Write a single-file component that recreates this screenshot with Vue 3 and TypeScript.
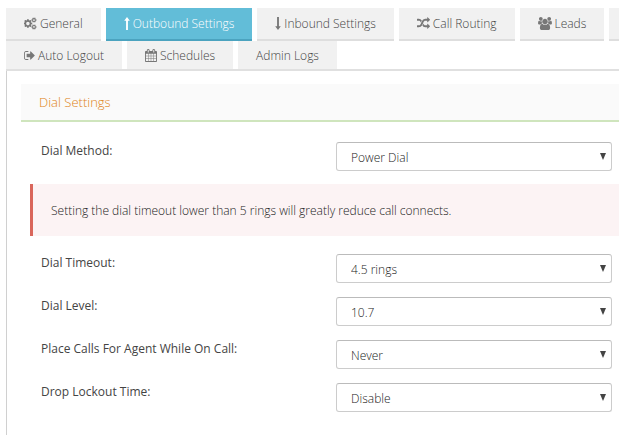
<script setup lang="ts">
import { reactive, ref } from 'vue'

interface Icon {
  box: string
  width: number
  path: string
}

interface Tab {
  label: string
  icon?: Icon
}

interface Field {
  id: string
  label: string
  options: string[]
}

const smallCog =
  'v140q0 16-149 31-12 27-30 52 51 113 51 138 0 4-4 7-122 71-124 71-8 0-46-47t-52-68q-20 2-30 2t-30-2q-14 21-52 68t-46 47q-2 0-124-71-4-3-4-7 0-25 51-138-18-25-30-52-149-15-149-31v-140q0-16 149-31 13-29 30-52-51-113-51-138 0-4 4-7 4-2 35-20t59-34 30-16q8 0 46 46.5t52 67.5q20-2 30-2t30 2q51-71 92-112l6-2q4 0 124 70 4 3 4 7 0 25-51 138 17 23 30 52 149 15 149 31z'

const icons: Record<string, Icon> = {
  cogs: {
    box: '0 0 1920 1792',
    width: 13,
    path:
      'M832 896q0-106-75-181t-181-75-181 75-75 181 75 181 181 75 181-75 75-181zm768 512q0-52-38-90t-90-38-90 38-38 90q0 53 37.5 90.5t90.5 37.5 90.5-37.5 37.5-90.5zm0-1024q0-52-38-90t-90-38-90 38-38 90q0 53 37.5 90.5t90.5 37.5 90.5-37.5 37.5-90.5zm-384 421v185q0 10-7 19.5t-16 10.5l-155 24q-11 35-32 76 34 48 90 115 7 11 7 20 0 12-7 19-23 30-82.5 89.5t-78.5 59.5q-11 0-21-7l-115-90q-37 19-77 31-11 108-23 155-7 24-30 24h-186q-11 0-20-7.5t-10-17.5l-23-153q-34-10-75-31l-118 89q-7 7-20 7-11 0-21-8-144-133-144-160 0-9 7-19 10-14 41-53t47-61q-23-44-35-82l-152-24q-10-1-17-9.5t-7-19.5v-185q0-10 7-19.5t16-10.5l155-24q11-35 32-76-34-48-90-115-7-11-7-20 0-12 7-20 22-30 82-89t79-59q11 0 21 7l115 90q34-18 77-32 11-108 23-154 7-24 30-24h186q11 0 20 7.5t10 17.5l23 153q34 10 75 31l118-89q8-7 20-7 11 0 21 8 144 133 144 160 0 8-7 19-12 16-42 54t-45 60q23 48 34 82l152 23q10 2 17 10.5t7 19.5z' +
      'M1856 1338' + smallCog + 'M1856 314' + smallCog,
  },
  arrowUp: { box: '0 0 6 14', width: 6, path: 'M3 0L6 4H4V14H2V4H0Z' },
  arrowDown: { box: '0 0 6 14', width: 6, path: 'M3 14L6 10H4V0H2V10H0Z' },
  random: {
    box: '0 0 1792 1792',
    width: 13,
    path: 'M666 481q-60 92-137 273-22-45-37-72.5t-40.5-63.5-51-56.5-63-35-81.5-14.5h-224q-14 0-23-9t-9-23v-192q0-14 9-23t23-9h224q250 0 410 225zm1126 799q0 14-9 23l-320 320q-9 9-23 9-13 0-22.5-9.5t-9.5-22.5v-192q-32 0-85 .5t-81 1-73-1-71-5-64-10.5-63-18.5-58-28.5-59-40-55-53.5-56-69.5q59-93 136-273 22 45 37 72.5t40.5 63.5 51 56.5 63 35 81.5 14.5h256v-192q0-14 9-23t23-9q12 0 24 10l319 319q9 9 9 23zm0-896q0 14-9 23l-320 320q-9 9-23 9-13 0-22.5-9.5t-9.5-22.5v-192h-256q-48 0-87 15t-69 45-51 61.5-45 77.5q-32 62-78 171-29 66-49.5 111t-54 105-64 100-74 83-90 68.5-106.5 42-128 16.5h-224q-14 0-23-9t-9-23v-192q0-14 9-23t23-9h224q48 0 87-15t69-45 51-61.5 45-77.5q32-62 78-171 29-66 49.5-111t54-105 64-100 74-83 90-68.5 106.5-42 128-16.5h256v-192q0-14 9-23t23-9q12 0 24 10l319 319q9 9 9 23z',
  },
  users: {
    box: '0 0 1920 1792',
    width: 14,
    path: 'M593 896q-162 5-265 128h-134q-82 0-138-40.5t-56-118.5q0-353 124-353 6 0 43.5 21t97.5 42.5 119 21.5q67 0 133-23-5 37-5 66 0 139 81 256zm1071 637q0 120-73 189.5t-194 69.5h-874q-121 0-194-69.5t-73-189.5q0-53 3.5-103.5t14-109 26.5-108.5 43-97.5 62-81 85.5-53.5 111.5-20q10 0 43 21.5t73 48 107 48 135 21.5 135-21.5 107-48 73-48 43-21.5q61 0 111.5 20t85.5 53.5 62 81 43 97.5 26.5 108.5 14 109 3.5 103.5zm-1024-1277q0 106-75 181t-181 75-181-75-75-181 75-181 181-75 181 75 75 181zm704 384q0 159-112.5 271.5t-271.5 112.5-271.5-112.5-112.5-271.5 112.5-271.5 271.5-112.5 271.5 112.5 112.5 271.5zm576 225q0 78-56 118.5t-138 40.5h-134q-103-123-265-128 81-117 81-256 0-29-5-66 66 23 133 23 59 0 119-21.5t97.5-42.5 43.5-21q124 0 124 353zm-128-609q0 106-75 181t-181 75-181-75-75-181 75-181 181-75 181 75 75 181z',
  },
  signOut: {
    box: '64 0 1600 1792',
    width: 11,
    path: 'M704 1440q0 4 1 20t.5 26.5-3 23.5-10 19.5-20.5 6.5h-320q-119 0-203.5-84.5t-84.5-203.5v-704q0-119 84.5-203.5t203.5-84.5h320q13 0 22.5 9.5t9.5 22.5q0 4 1 20t.5 26.5-3 23.5-10 19.5-20.5 6.5h-320q-66 0-113 47t-47 113v704q0 66 47 113t113 47h312l11.5 1 11.5 3 8 5.5 7 9 2 13.5zm928-544q0 26-19 45l-544 544q-19 19-45 19t-45-19-19-45v-288h-448q-26 0-45-19t-19-45v-384q0-26 19-45t45-19h448v-288q0-26 19-45t45-19 45 19l544 544q19 19 19 45z',
  },
  calendar: {
    box: '64 0 1664 1792',
    width: 12,
    path: 'M192 1664h288v-288h-288v288zm352 0h320v-288h-320v288zm-352-352h288v-320h-288v320zm352 0h320v-320h-320v320zm-352-384h288v-288h-288v288zm736 736h320v-288h-320v288zm-384-736h320v-288h-320v288zm768 736h288v-288h-288v288zm-384-352h320v-320h-320v320zm-352-864v-288q0-13-9.5-22.5t-22.5-9.5h-64q-13 0-22.5 9.5t-9.5 22.5v288q0 13 9.5 22.5t22.5 9.5h64q13 0 22.5-9.5t9.5-22.5zm736 864h288v-320h-288v320zm-384-384h320v-288h-320v288zm384 0h288v-288h-288v288zm32-480v-288q0-13-9.5-22.5t-22.5-9.5h-64q-13 0-22.5 9.5t-9.5 22.5v288q0 13 9.5 22.5t22.5 9.5h64q13 0 22.5-9.5t9.5-22.5zm384-64v1280q0 52-38 90t-90 38h-1408q-52 0-90-38t-38-90v-1280q0-52 38-90t90-38h128v-96q0-66 47-113t113-47h64q66 0 113 47t47 113v96h384v-96q0-66 47-113t113-47h64q66 0 113 47t47 113v96h128q52 0 90 38t38 90z',
  },
}

const tabRows: Tab[][] = [
  [
    { label: 'General', icon: icons.cogs },
    { label: 'Outbound Settings', icon: icons.arrowUp },
    { label: 'Inbound Settings', icon: icons.arrowDown },
    { label: 'Call Routing', icon: icons.random },
    { label: 'Leads', icon: icons.users },
  ],
  [
    { label: 'Auto Logout', icon: icons.signOut },
    { label: 'Schedules', icon: icons.calendar },
    { label: 'Admin Logs' },
  ],
]

const active = ref('Outbound Settings')

const methodFields: Field[] = [
  { id: 'dial-method', label: 'Dial Method:', options: ['Power Dial'] },
]

const dialFields: Field[] = [
  { id: 'dial-timeout', label: 'Dial Timeout:', options: ['4.5 rings'] },
  { id: 'dial-level', label: 'Dial Level:', options: ['10.7'] },
  { id: 'on-call', label: 'Place Calls For Agent While On Call:', options: ['Never'] },
  { id: 'drop-lockout', label: 'Drop Lockout Time:', options: ['Disable'] },
]

const groups = [methodFields, dialFields]

const values = reactive<Record<string, string>>({
  'dial-method': 'Power Dial',
  'dial-timeout': '4.5 rings',
  'dial-level': '10.7',
  'on-call': 'Never',
  'drop-lockout': 'Disable',
})
</script>

<template>
  <div class="page">
    <nav class="tabs">
      <div v-for="(row, r) in tabRows" :key="r" class="tab-row">
        <button
          v-for="tab in row"
          :key="tab.label"
          type="button"
          class="tab"
          :class="{ active: tab.label === active }"
          @click="active = tab.label"
        >
          <svg
            v-if="tab.icon"
            class="icon"
            :width="tab.icon.width"
            height="13"
            :viewBox="tab.icon.box"
            aria-hidden="true"
          >
            <path :d="tab.icon.path" fill="currentColor" />
          </svg>
          <span>{{ tab.label }}</span>
        </button>
        <span v-if="r === 0" class="tab rest"></span>
      </div>
    </nav>

    <main class="panel">
      <h2 class="heading">Dial Settings</h2>
      <template v-for="(group, g) in groups" :key="g">
        <p v-if="g === 1" class="alert">
          Setting the dial timeout lower than 5 rings will greatly reduce call connects.
        </p>
        <div class="fields">
          <div v-for="field in group" :key="field.id" class="field">
            <label :for="field.id">{{ field.label }}</label>
            <div class="select">
              <select :id="field.id" v-model="values[field.id]">
                <option v-for="o in field.options" :key="o">{{ o }}</option>
              </select>
              <svg class="caret" width="6" height="7" viewBox="0 0 6 7" aria-hidden="true">
                <path d="M0 0H6L3 7Z" fill="currentColor" />
              </svg>
            </div>
          </div>
        </div>
      </template>
    </main>
  </div>
</template>

<style>
body {
  margin: 0;
  background: #fff;
}
</style>

<style scoped>
.page {
  display: flex;
  flex-direction: column;
  min-height: 100vh;
  padding: 8px 0 0 6px;
  box-sizing: border-box;
  overflow: hidden;
  font-family: 'Open Sans', 'Liberation Sans', sans-serif;
  font-size: 12px;
  font-weight: 300;
  color: #222;
}

.tabs {
  border-bottom: 2px solid #e0e0e0;
}

.tab-row {
  display: flex;
  gap: 5px;
}

.tab {
  display: flex;
  align-items: center;
  gap: 3px;
  flex: none;
  height: 28px;
  padding: 0 18px;
  border: 0;
  background: #f1f1f1;
  color: #444;
  font: inherit;
  white-space: nowrap;
  cursor: pointer;
}

.tab-row:first-child .tab {
  height: 33px;
  border-bottom: 2px solid #dedede;
}

.tab-row:first-child .tab.active {
  border-bottom-color: #4ba3bf;
  background: #62bdd8;
  color: #fff;
}

.tab.rest {
  flex: 1;
  padding: 0;
  box-sizing: border-box;
}

.icon {
  flex: none;
  color: #777;
}

.active .icon {
  color: #fff;
}

.panel {
  flex: 1;
  padding: 13px 0 20px 14px;
  border-left: 1px solid #d0d0d0;
}

.heading {
  margin: 0;
  padding: 0 18px;
  border-bottom: 2px solid #cfe5bd;
  background: #fafafa;
  color: #e08317;
  font-size: 13px;
  font-weight: 300;
  line-height: 36px;
}

.fields {
  display: flex;
  flex-direction: column;
  gap: 14px;
  padding: 20px 7px 0 20px;
}

.alert + .fields {
  padding-top: 18px;
}

.field {
  display: grid;
  grid-template-columns: minmax(0, 295fr) minmax(0, 276fr);
  align-items: start;
}

label {
  color: #444;
  line-height: 17px;
  font-weight: 500;
}

.select {
  display: grid;
  align-items: center;
}

.select > * {
  grid-area: 1 / 1;
}

select {
  width: 100%;
  height: 29px;
  padding: 1px 24px 0 14px;
  border: 1px solid #ccc;
  border-top-color: #bbb;
  border-radius: 3px;
  background: #fff;
  color: #222;
  font: inherit;
  appearance: none;
}

.caret {
  justify-self: end;
  margin-right: 6px;
  color: #444;
  pointer-events: none;
}

.alert {
  margin: 13px 0 0 9px;
  padding: 17px 18px 15px;
  border-left: 3px solid #d9665b;
  background: #fcf3f4;
  line-height: 20px;
}
</style>
